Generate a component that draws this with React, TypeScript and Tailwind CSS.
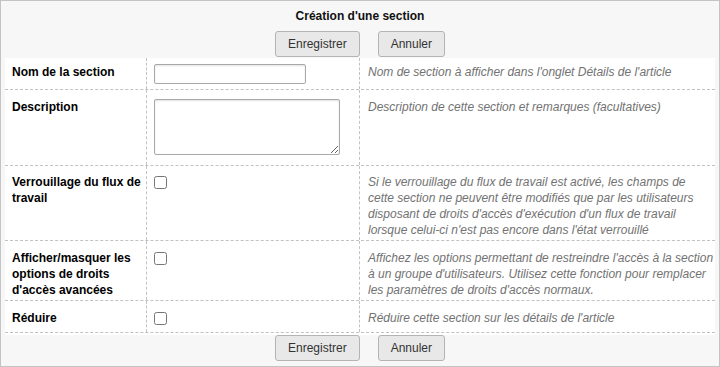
import type { ReactNode } from "react";

type Row = {
  label: ReactNode;
  field: "input" | "textarea" | "checkbox";
  help: ReactNode;
  height: string;
  top: string;
};

const rows: Row[] = [
  {
    label: "Nom de la section",
    field: "input",
    help: "Nom de section à afficher dans l'onglet Détails de l'article",
    height: "h-[32px]",
    top: "pt-[6px]",
  },
  {
    label: "Description",
    field: "textarea",
    help: "Description de cette section et remarques (facultatives)",
    height: "h-[76px]",
    top: "pt-[9px]",
  },
  {
    label: (
      <>
        Verrouillage du flux de
        <br />
        travail
      </>
    ),
    field: "checkbox",
    help: (
      <>
        Si le verrouillage du flux de travail est activé, les champs de
        <br />
        cette section ne peuvent être modifiés que par les utilisateurs
        <br />
        disposant de droits d'accès d'exécution d'un flux de travail
        <br />
        lorsque celui-ci n'est pas encore dans l'état verrouillé
      </>
    ),
    height: "h-[75px]",
    top: "pt-[8px]",
  },
  {
    label: (
      <>
        Afficher/masquer les
        <br />
        options de droits
        <br />
        d'accès avancées
      </>
    ),
    field: "checkbox",
    help: (
      <>
        Affichez les options permettant de restreindre l'accès à la section
        <br />
        à un groupe d'utilisateurs. Utilisez cette fonction pour remplacer
        <br />
        les paramètres de droits d'accès normaux.
      </>
    ),
    height: "h-[60px]",
    top: "pt-[9px]",
  },
  {
    label: "Réduire",
    field: "checkbox",
    help: "Réduire cette section sur les détails de l'article",
    height: "h-[32px]",
    top: "pt-[9px]",
  },
];

const Buttons = ({ className }: { className: string }) => (
  <div className={`flex justify-center gap-[18px] ${className}`}>
    <button
      type="button"
      className="h-[26px] rounded-[3px] border border-[#b4b4b4] bg-[#e8e8e8] px-3 text-[12px] text-[#333]"
    >
      Enregistrer
    </button>
    <button
      type="button"
      className="h-[26px] rounded-[3px] border border-[#b4b4b4] bg-[#e8e8e8] px-3 text-[12px] text-[#333]"
    >
      Annuler
    </button>
  </div>
);

const Field = ({ kind }: { kind: Row["field"] }) => {
  if (kind === "input") {
    return (
      <input
        type="text"
        className="block h-[20px] w-[152px] rounded-[2px] border border-[#a9a9a9] bg-white shadow-[inset_0_1px_2px_rgba(0,0,0,0.12)] outline-none"
      />
    );
  }
  if (kind === "textarea") {
    return (
      <textarea className="block h-[56px] w-[186px] resize rounded-[2px] border border-[#a9a9a9] bg-white shadow-[inset_0_1px_2px_rgba(0,0,0,0.12)] outline-none" />
    );
  }
  return <input type="checkbox" className="m-0 mt-[2px] block h-[13px] w-[13px]" />;
};

export default function App() {
  return (
    <div className="h-[367px] w-[720px] border border-[#c4c4c4] bg-[#f7f7f7] font-['Liberation_Sans',Arial,sans-serif] text-[12px] leading-4">
      <div className="pt-[7px] text-center font-bold text-[#111]">Création d'une section</div>
      <Buttons className="mt-[7px]" />

      <div className="mx-1 mt-px bg-white pb-[2px]">
        {rows.map((row, i) => (
          <div
            key={i}
            className={`grid grid-cols-[142px_213px_1fr] border-b border-dashed border-[#c2c2c2] ${row.height}`}
          >
            <div className={`border-r border-dashed border-[#c2c2c2] pl-[7px] pr-[5px] font-bold text-black ${row.top}`}>
              {row.label}
            </div>
            <div className={`border-r border-dashed border-[#c2c2c2] pl-[7px] ${row.field === "input" ? "pt-[6px]" : row.top}`}>
              <Field kind={row.field} />
            </div>
            <div className={`whitespace-nowrap pl-2 italic text-[#727272] ${row.top}`}>{row.help}</div>
          </div>
        ))}
      </div>

      <Buttons className="mt-0" />
    </div>
  );
}
